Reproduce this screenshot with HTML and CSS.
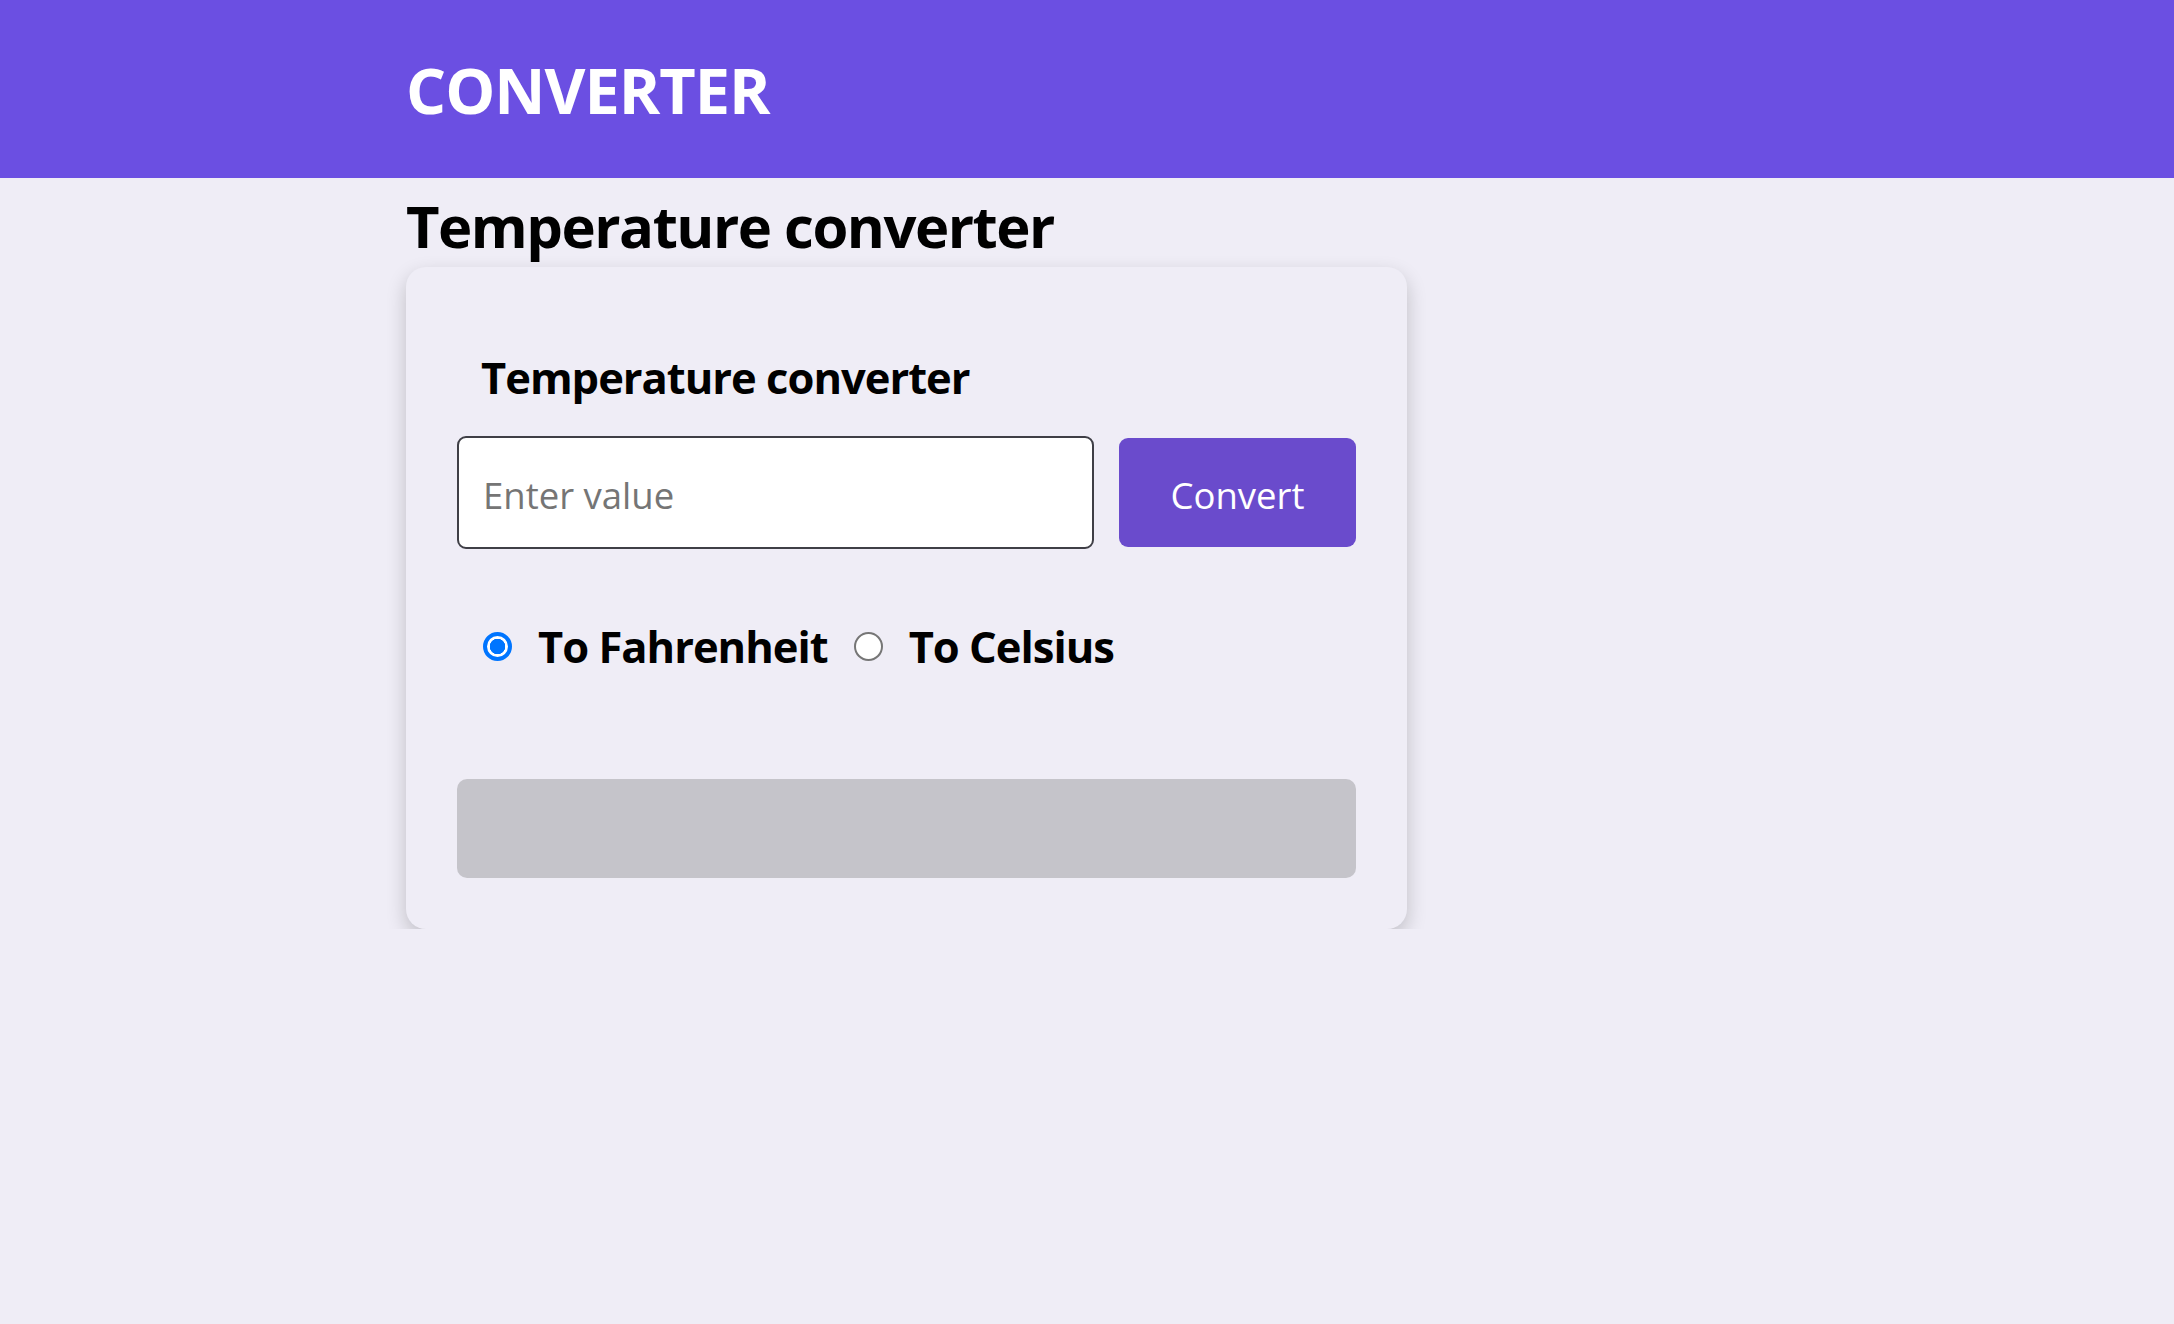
FILE: index.html
```html
<!DOCTYPE html>
<html lang="en">
<head>
<meta charset="utf-8">
<title>Converter</title>
<link rel="stylesheet" href="styles.css">
</head>
<body>
<header class="topbar">
  <div class="wrap topbar-inner">
    <h1 class="brand">CONVERTER</h1>
  </div>
</header>
<main class="wrap">
  <h2 class="page-title">Temperature converter</h2>
  <section class="card">
    <h3 class="card-title">Temperature converter</h3>
    <div class="input-row">
      <input class="value-input" type="text" placeholder="Enter value">
      <button class="convert-btn" type="button">Convert</button>
    </div>
    <div class="radio-row">
      <label class="radio-label"><input class="radio" type="radio" name="unit" checked><span>To Fahrenheit</span></label>
      <label class="radio-label"><input class="radio" type="radio" name="unit"><span>To Celsius</span></label>
    </div>
    <div class="result"></div>
  </section>
</main>
</body>
</html>
```
FILE: styles.css
```css
* { box-sizing: border-box; }
html, body { margin: 0; padding: 0; }
body {
  background: #efedf6;
  font-family: "Open Sans", "Noto Sans", sans-serif;
  color: #000;
}
.wrap {
  width: 1362px;
  margin: 0 auto;
}
.topbar {
  background: #6b4fe2;
  height: 178px;
}
.topbar-inner {
  height: 100%;
  display: flex;
  align-items: center;
}
.brand {
  margin: 0;
  color: #fff;
  font-size: 63px;
  line-height: 1;
  font-weight: 700;
  letter-spacing: -1px;
}
.page-title {
  margin: 19px 0 12px;
  font-size: 58px;
  line-height: 1;
  font-weight: 700;
  letter-spacing: -1.5px;
}
.card {
  width: 1001px;
  background: #efedf6;
  border-radius: 20px;
  padding: 51px;
  box-shadow: 0 8px 20px rgba(0, 0, 0, 0.2);
}
.card-title {
  margin: 38px 0 36px 24px;
  font-size: 43.5px;
  line-height: 1;
  font-weight: 700;
  letter-spacing: -1px;
}
.input-row {
  display: flex;
  align-items: center;
  gap: 25px;
}
.value-input {
  width: 637px;
  height: 113px;
  border: 2px solid #3f3f46;
  border-radius: 9px;
  background: #fff;
  padding: 5px 0 0 24px;
  font-family: inherit;
  font-size: 36.5px;
  color: #000;
  outline: none;
}
.value-input::placeholder { color: #757575; }
.convert-btn {
  width: 237px;
  height: 109px;
  border: none;
  border-radius: 9px;
  background: #6a4bcc;
  color: #fff;
  font-family: inherit;
  font-size: 36.5px;
  padding: 5px 0 0;
}
.radio-row {
  display: flex;
  align-items: center;
  gap: 26px;
  margin: 76px 0 111px 26px;
  font-size: 43.5px;
  line-height: 1;
  font-weight: 700;
  letter-spacing: -1px;
}
.radio-label {
  display: inline-flex;
  align-items: center;
  gap: 26px;
}
.radio {
  appearance: none;
  -webkit-appearance: none;
  margin: 0;
  width: 29px;
  height: 29px;
  border-radius: 50%;
  border: 2.5px solid #767676;
  background: #fff;
}
.radio:checked {
  border: 4px solid #0075ff;
  background: radial-gradient(circle, #0075ff 0 7.5px, #fff 8px);
}
.result {
  height: 99px;
  background: #c5c4ca;
  border-radius: 10px;
}
```
